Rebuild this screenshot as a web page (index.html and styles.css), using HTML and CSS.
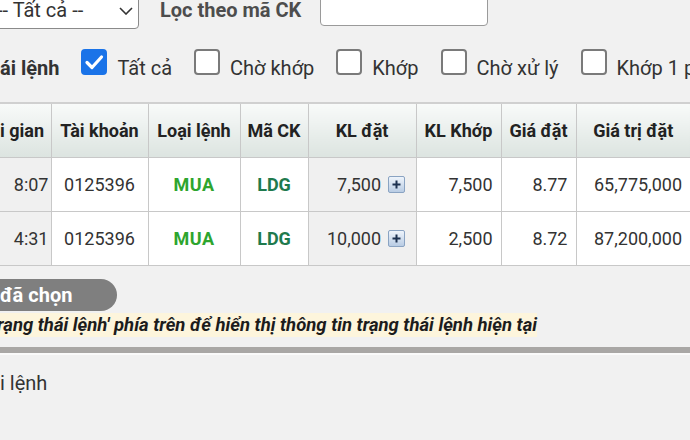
FILE: index.html
```html
<!DOCTYPE html>
<html lang="vi">
<head>
    <meta charset="UTF-8">
    <meta name="viewport" content="width=device-width, initial-scale=1.0">
    <title>Sổ lệnh</title>
    <link rel="stylesheet" href="styles.css">
</head>
<body>
    <div class="filters">
        <div class="select">
            <span>-- Tất cả --</span>
            <svg class="chevron" width="14" height="8" viewBox="0 0 14 8"><path d="M1 1 L7 7 L13 1" fill="none" stroke="#333" stroke-width="1.6"/></svg>
        </div>
        <label class="filter-label" for="code">Lọc theo mã CK</label>
        <input class="code-input" id="code" type="text">
    </div>

    <div class="status">
        <div class="status-label">ái lệnh</div>
        <div class="check">
            <span class="box checked">
                <svg width="26" height="26" viewBox="0 0 26 26"><path d="M6 13.5 L11 18.5 L20.5 8" fill="none" stroke="#fff" stroke-width="3.2" stroke-linecap="round" stroke-linejoin="round"/></svg>
            </span>
            <span class="check-text">Tất cả</span>
        </div>
        <div class="check"><span class="box"></span><span class="check-text">Chờ khớp</span></div>
        <div class="check"><span class="box"></span><span class="check-text">Khớp</span></div>
        <div class="check"><span class="box"></span><span class="check-text">Chờ xử lý</span></div>
        <div class="check"><span class="box"></span><span class="check-text">Khớp 1 p</span></div>
    </div>

    <table class="orders">
        <colgroup>
            <col style="width:51px">
            <col style="width:97px">
            <col style="width:92px">
            <col style="width:68px">
            <col style="width:108px">
            <col style="width:85px">
            <col style="width:75px">
            <col style="width:114px">
        </colgroup>
        <thead>
            <tr>
                <th class="first">i gian</th>
                <th>Tài khoản</th>
                <th>Loại lệnh</th>
                <th>Mã CK</th>
                <th>KL đặt</th>
                <th>KL Khớp</th>
                <th>Giá đặt</th>
                <th class="last">Giá trị đặt</th>
            </tr>
        </thead>
        <tbody>
            <tr>
                <td class="time">8:07</td>
                <td class="center">0125396</td>
                <td class="center side">MUA</td>
                <td class="center code">LDG</td>
                <td class="qty">7,500 <span class="plus"><svg width="17" height="17" viewBox="0 0 17 17"><path d="M8.5 4.5 V12.5 M4.5 8.5 H12.5" stroke="#1c3150" stroke-width="2"/></svg></span></td>
                <td class="num">7,500</td>
                <td class="num">8.77</td>
                <td class="num last">65,775,000</td>
            </tr>
            <tr>
                <td class="time">4:31</td>
                <td class="center">0125396</td>
                <td class="center side">MUA</td>
                <td class="center code">LDG</td>
                <td class="qty">10,000 <span class="plus"><svg width="17" height="17" viewBox="0 0 17 17"><path d="M8.5 4.5 V12.5 M4.5 8.5 H12.5" stroke="#1c3150" stroke-width="2"/></svg></span></td>
                <td class="num">2,500</td>
                <td class="num">8.72</td>
                <td class="num last">87,200,000</td>
            </tr>
        </tbody>
    </table>

    <div class="selected">đã chọn</div>
    <div class="note">Chọn 'Trạng thái lệnh' phía trên để hiển thị thông tin trạng thái lệnh hiện tại</div>
    <div class="divider"></div>
    <div class="section-title">i lệnh</div>
</body>
</html>
```
FILE: styles.css
```css
body {
    margin: 0;
    background: #f1f1f1;
    font-family: Roboto, "Noto Sans", sans-serif;
    color: #333;
    overflow: hidden;
}

/* filter row */
.filters {
    display: flex;
    align-items: flex-start;
    height: 30px;
}
.select {
    box-sizing: border-box;
    width: 151px;
    height: 39px;
    margin-top: -10px;
    margin-left: -12px;
    padding: 0 5px 0 8px;
    display: flex;
    align-items: center;
    justify-content: space-between;
    background: #fff;
    border: 1px solid #8a8a8a;
    border-radius: 4px;
    font-size: 20px;
    color: #333;
}
.chevron {
    margin-top: 3px;
}
.filter-label {
    margin-left: 21px;
    font-size: 20px;
    line-height: 20px;
    font-weight: bold;
    color: #4d4d4d;
}
.code-input {
    box-sizing: border-box;
    width: 168px;
    height: 36px;
    margin-top: -10px;
    margin-left: 19px;
    background: #fff;
    border: 1px solid #9a9a9a;
    border-radius: 4px;
}

/* status checkboxes */
.status {
    display: flex;
    align-items: center;
    height: 26px;
    margin-top: 19px;
    white-space: nowrap;
}
.status-label {
    flex: none;
    padding-top: 12px;
    font-size: 20px;
    font-weight: bold;
    color: #333;
}
.check {
    flex: none;
    display: flex;
    align-items: center;
    gap: 10px;
    margin-left: 22px;
    font-size: 20px;
    color: #333;
}
.check-text {
    padding-top: 12px;
}
.box {
    box-sizing: border-box;
    width: 26px;
    height: 26px;
    background: #fff;
    border: 2px solid #7a7a7a;
    border-radius: 4px;
}
.box.checked {
    background: #1a73e8;
    border-color: #1a73e8;
    position: relative;
}
.box.checked svg {
    position: absolute;
    left: -2px;
    top: -2px;
}

/* orders table */
.orders {
    width: 690px;
    margin-top: 27px;
    border-collapse: collapse;
    table-layout: fixed;
    font-size: 18px;
}
.orders th,
.orders td {
    border: 1px solid #c8c8c8;
    white-space: nowrap;
    overflow: hidden;
}
.orders thead tr {
    border-top: 2px solid #d0d0d0;
}
.orders .first,
.orders .time {
    border-left: none;
}
.orders .last {
    border-right: none;
}
.orders th {
    height: 53px;
    padding: 0;
    background: linear-gradient(#f8faf9, #dce4e0);
    font-weight: bold;
    color: #222;
}
.orders th.first {
    padding-right: 8px;
    text-align: right;
}
.orders td {
    height: 53px;
    padding: 0 8px;
    background: #fff;
    color: #333;
}
.orders td.time {
    padding-right: 2px;
    text-align: right;
    background: #f0f0f0;
}
.center {
    text-align: center;
}
.num {
    text-align: right;
}
.orders td.last {
    padding-right: 8px;
}
.orders td.qty {
    padding-right: 11px;
    text-align: right;
    background: #f0f0f0;
}
.orders td.side {
    font-weight: bold;
    color: #2ea52e;
    letter-spacing: 0.5px;
}
.orders td.code {
    font-weight: bold;
    color: #1f7a4d;
}
.plus {
    display: inline-block;
    box-sizing: border-box;
    width: 17px;
    height: 17px;
    margin-left: 2px;
    vertical-align: -2px;
    background: linear-gradient(#eef4fb, #b9cce4);
    border: 1px solid #8aa3c2;
    border-radius: 2px;
    line-height: 0;
}
.plus svg {
    margin: -1px 0 0 -1px;
}

/* bottom panel */
.selected {
    box-sizing: border-box;
    width: 117px;
    height: 32px;
    margin-top: 13px;
    background: #7f7f7f;
    border-radius: 0 16px 16px 0;
    color: #fff;
    font-size: 20px;
    font-weight: bold;
    line-height: 32px;
}
.note {
    width: 660px;
    height: 24px;
    margin-top: 2px;
    margin-left: -123px;
    background: #fdf5dc;
    color: #1c1c1c;
    font-size: 18.5px;
    font-weight: bold;
    font-style: italic;
    line-height: 24px;
    text-align: right;
    white-space: nowrap;
}
.divider {
    height: 6px;
    margin-top: 10px;
    background: #a9a7a5;
    border-bottom: 2px solid #fafafa;
}
.section-title {
    margin-top: 16px;
    font-size: 20px;
    line-height: 24px;
    color: #333;
}
```
